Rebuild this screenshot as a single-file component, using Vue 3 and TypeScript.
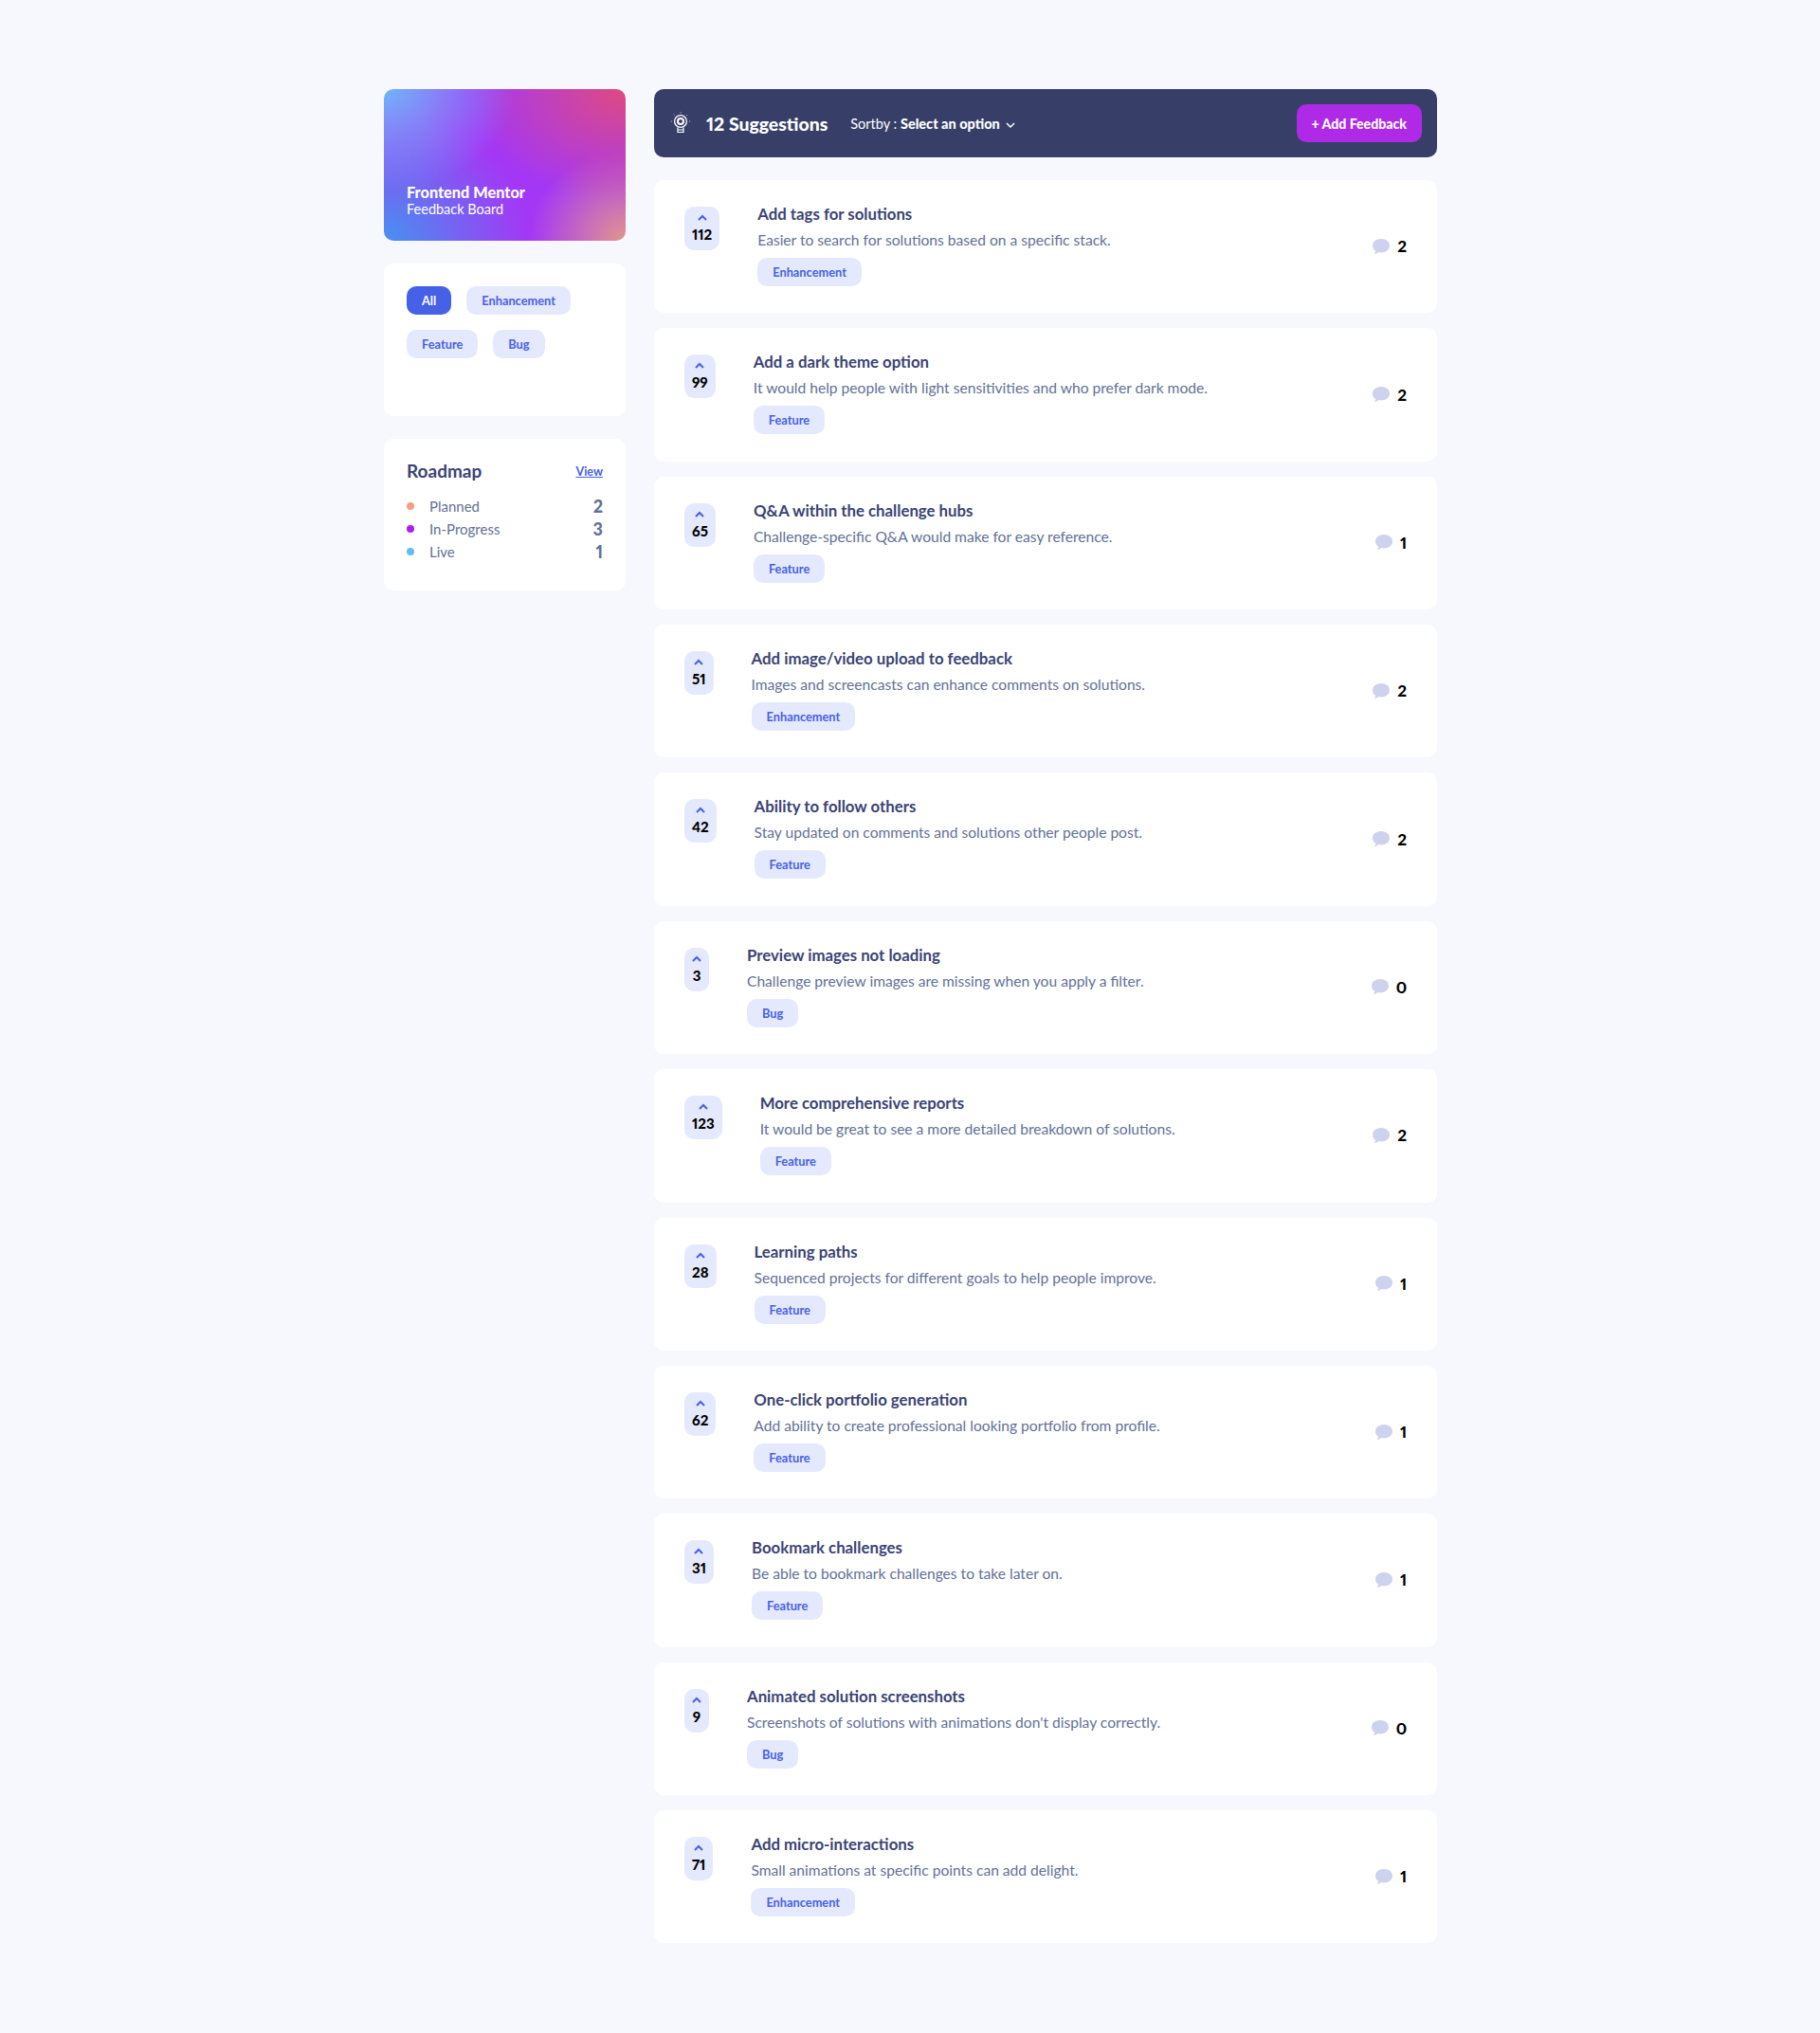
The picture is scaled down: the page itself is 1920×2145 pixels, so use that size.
<template>
  <div class="page">
    <aside class="sidebar">
      <div class="brand">
        <strong>Frontend Mentor</strong>
        <span>Feedback Board</span>
      </div>

      <div class="panel filters">
        <button v-for="(f, i) in filters" :key="f" class="chip" :class="{ active: i === 0 }">{{ f }}</button>
      </div>

      <div class="panel roadmap">
        <div class="roadmap-head">
          <h2>Roadmap</h2>
          <a href="#">View</a>
        </div>
        <ul>
          <li v-for="r in roadmap" :key="r.name">
            <i :style="{ background: r.color }"></i>
            <span>{{ r.name }}</span>
            <b>{{ r.count }}</b>
          </li>
        </ul>
      </div>
    </aside>

    <main class="main">
      <header class="bar">
        <svg class="bulb" width="24" height="24" viewBox="0 0 24 24" fill="none" stroke="#fff">
          <circle cx="12" cy="10" r="6.400" stroke-width="1.300" />
          <circle cx="12" cy="10" r="3" stroke-width="2" />
          <path d="M9 16.500v5h6v-5M9 19h6" stroke-width="1.200" />
          <path d="M12 .5v1M4.800 3l.7.7M19.200 3l-.7.7M1.800 10h1M21.200 10h1" stroke-width=".8" />
        </svg>
        <h1>12 Suggestions</h1>
        <div class="sort">Sortby : <b>Select an option</b>
          <svg width="10" height="7" viewBox="0 0 10 7" fill="none" stroke="#fff" stroke-width="1.500"><path d="M1 1l4 4 4-4" /></svg>
        </div>
        <button class="add">+ Add Feedback</button>
      </header>

      <article v-for="s in suggestions" :key="s.title" class="card">
        <div class="vote">
          <svg width="10" height="7" viewBox="0 0 10 7" fill="none" stroke="#4661e6" stroke-width="2"><path d="M1 6l4-4 4 4" /></svg>
          <b>{{ s.votes }}</b>
        </div>
        <div class="body">
          <h3>{{ s.title }}</h3>
          <p>{{ s.text }}</p>
          <span class="chip">{{ s.tag }}</span>
        </div>
        <div class="comments">
          <svg width="18" height="16" viewBox="0 0 18 16"><path fill="#cdd2ee" d="M9 0c5 0 9 3 9 7.200s-4 7.200-9 7.200c-.9 0-1.800-.1-2.600-.3C5 15.300 3.200 16 1.500 16c1-.9 1.500-2 1.600-3.200C1.200 11.500 0 9.500 0 7.200 0 3 4 0 9 0z" /></svg>
          <b>{{ s.comments }}</b>
        </div>
      </article>
    </main>
  </div>
</template>

<script setup lang="ts">
const filters = ['All', 'Enhancement', 'Feature', 'Bug']

const roadmap = [
  { name: 'Planned', count: 2, color: '#f49f85' },
  { name: 'In-Progress', count: 3, color: '#ad1fea' },
  { name: 'Live', count: 1, color: '#62bcfa' },
]

const suggestions = [
  { votes: 112, title: 'Add tags for solutions', text: 'Easier to search for solutions based on a specific stack.', tag: 'Enhancement', comments: 2 },
  { votes: 99, title: 'Add a dark theme option', text: 'It would help people with light sensitivities and who prefer dark mode.', tag: 'Feature', comments: 2 },
  { votes: 65, title: 'Q&A within the challenge hubs', text: 'Challenge-specific Q&A would make for easy reference.', tag: 'Feature', comments: 1 },
  { votes: 51, title: 'Add image/video upload to feedback', text: 'Images and screencasts can enhance comments on solutions.', tag: 'Enhancement', comments: 2 },
  { votes: 42, title: 'Ability to follow others', text: 'Stay updated on comments and solutions other people post.', tag: 'Feature', comments: 2 },
  { votes: 3, title: 'Preview images not loading', text: 'Challenge preview images are missing when you apply a filter.', tag: 'Bug', comments: 0 },
  { votes: 123, title: 'More comprehensive reports', text: 'It would be great to see a more detailed breakdown of solutions.', tag: 'Feature', comments: 2 },
  { votes: 28, title: 'Learning paths', text: 'Sequenced projects for different goals to help people improve.', tag: 'Feature', comments: 1 },
  { votes: 62, title: 'One-click portfolio generation', text: 'Add ability to create professional looking portfolio from profile.', tag: 'Feature', comments: 1 },
  { votes: 31, title: 'Bookmark challenges', text: 'Be able to bookmark challenges to take later on.', tag: 'Feature', comments: 1 },
  { votes: 9, title: 'Animated solution screenshots', text: "Screenshots of solutions with animations don't display correctly.", tag: 'Bug', comments: 0 },
  { votes: 71, title: 'Add micro-interactions', text: 'Small animations at specific points can add delight.', tag: 'Enhancement', comments: 1 },
]
</script>

<style>
html,
body {
  margin: 0;
  background: #f7f8fd;
}
</style>

<style scoped>
.page {
  box-sizing: border-box;
  width: 1111px;
  min-height: 2145px;
  margin-left: 405px;
  padding-top: 94px;
  display: flex;
  align-items: flex-start;
  gap: 30px;
  font-family: Lato, sans-serif;
  font-variant-numeric: proportional-nums;
  color: #3a4374;
}
.sidebar {
  width: 255px;
  flex: none;
  display: flex;
  flex-direction: column;
  gap: 24px;
}
.brand {
  box-sizing: border-box;
  height: 160px;
  padding: 0 24px 25px;
  border-radius: 10px;
  display: flex;
  flex-direction: column;
  justify-content: flex-end;
  color: #fff;
  background:
    radial-gradient(80% 100% at 0% 0%, #71b5fa 0%, rgba(113, 181, 250, 0) 68%),
    radial-gradient(65% 75% at 100% 0%, #df4a80 0%, rgba(223, 74, 128, 0.55) 45%, rgba(223, 74, 128, 0) 100%),
    radial-gradient(40% 60% at 100% 100%, #e3968c 0%, rgba(227, 150, 140, 0) 100%),
    radial-gradient(60% 85% at 0% 100%, #4691f0 0%, rgba(70, 145, 240, 0) 100%),
    #a437f5;
}
.brand strong {
  font-size: 16.300px;
  line-height: 18px;
  font-weight: 900;
}
.brand span {
  font-size: 14.500px;
  line-height: 17px;
}
.panel {
  background: #fff;
  border-radius: 10px;
  box-sizing: border-box;
  height: 160px;
  padding: 24px;
}
.filters {
  height: 161px;
  display: flex;
  flex-wrap: wrap;
  align-content: flex-start;
  gap: 16px;
}
.chip {
  display: inline-block;
  box-sizing: border-box;
  height: 30px;
  line-height: 30px;
  padding: 0 16px;
  border: 0;
  border-radius: 10px;
  background: #e5e9fd;
  color: #4661e6;
  font-family: inherit;
  font-size: 12.800px;
  font-weight: 700;
}
.chip.active {
  background: #4661e6;
  color: #fff;
}
.roadmap-head {
  display: flex;
  justify-content: space-between;
  align-items: center;
  margin-bottom: 13px;
}
.roadmap-head h2 {
  margin: -2px 0 0;
  font-size: 19px;
  line-height: 24px;
  font-weight: 700;
}
.roadmap-head a {
  margin-top: -2px;
  color: #4661e6;
  font-size: 12.500px;
  font-weight: 700;
}
.roadmap ul {
  list-style: none;
  margin: 0;
  padding: 0;
}
.roadmap li {
  display: flex;
  align-items: center;
  height: 24px;
  font-size: 15px;
  color: #647196;
}
.roadmap li i {
  width: 8px;
  height: 8px;
  border-radius: 50%;
  margin-right: 16px;
}
.roadmap li b {
  margin-left: auto;
  font-size: 18px;
  font-weight: 900;
}
.main {
  flex: 1;
  min-width: 0;
}
.bar {
  height: 72px;
  box-sizing: border-box;
  margin-bottom: 24px;
  padding: 0 16px;
  border-radius: 10px;
  background: #373f68;
  color: #fff;
  display: flex;
  align-items: center;
}
.bulb {
  margin-right: 15px;
}
.bar h1 {
  margin: 0 24px 0 0;
  font-size: 19.400px;
  font-weight: 900;
}
.sort {
  font-size: 14.500px;
}
.sort b {
  font-weight: 900;
}
.sort svg {
  margin-left: 6px;
}
.add {
  margin-left: auto;
  height: 40px;
  padding: 0 16px;
  border: 0;
  border-radius: 10px;
  background: #ae2ae6;
  color: #fff;
  font-family: inherit;
  font-size: 14.100px;
  font-weight: 900;
}
.card {
  box-sizing: border-box;
  height: 140.360px;
  margin-bottom: 16px;
  padding: 28px 32px;
  border-radius: 10px;
  background: #fff;
  display: flex;
  align-items: flex-start;
}
.vote {
  box-sizing: border-box;
  height: 46px;
  padding: 8px 8px 0;
  border-radius: 10px;
  background: #e5e9fd;
  display: flex;
  flex-direction: column;
  align-items: center;
  gap: 5px;
  margin-right: 40px;
}
.vote svg {
  flex: none;
}
.vote b {
  color: #000;
  font-size: 15px;
  line-height: 18px;
  font-weight: 900;
}
.body {
  flex: 1;
  margin-top: -2px;
}
.body h3 {
  margin: 0 0 7px;
  font-size: 16.800px;
  line-height: 20px;
  font-weight: 700;
}
.body p {
  margin: 0 0 9px;
  font-size: 15.600px;
  line-height: 20px;
  color: #647196;
}
.comments {
  align-self: center;
  display: flex;
  align-items: center;
  gap: 8px;
  margin-top: -1px;
}
.comments b {
  color: #000;
  font-size: 17px;
  font-weight: 900;
}
</style>
